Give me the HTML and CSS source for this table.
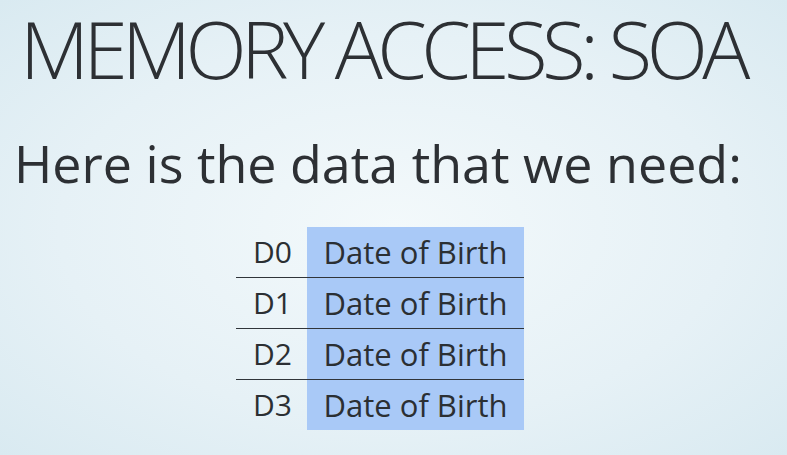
FILE: index.html
```html
<!DOCTYPE html>
<html>
<head>
<meta charset="utf-8">
<link rel="stylesheet" href="styles.css">
</head>
<body>
<div class="slide">
  <h1 class="title">MEMORY ACCESS: SOA</h1>
  <p class="lead">Here is the data that we need:</p>
  <div class="table">
    <div class="row"><span class="label">D0</span><span class="cell">Date of Birth</span></div>
    <div class="row"><span class="label">D1</span><span class="cell">Date of Birth</span></div>
    <div class="row"><span class="label">D2</span><span class="cell">Date of Birth</span></div>
    <div class="row"><span class="label">D3</span><span class="cell">Date of Birth</span></div>
  </div>
</div>
</body>
</html>
```
FILE: styles.css
```css
html, body {
  margin: 0;
  padding: 0;
}
body {
  width: 787px;
  height: 455px;
  overflow: hidden;
  background: radial-gradient(ellipse at 50% 50%, #f3f9fb 0%, #e6f1f6 60%, #d9eaf1 100%);
  font-family: "Open Sans", sans-serif;
  color: #2b2f33;
}
.slide {
  display: flex;
  flex-direction: column;
  padding-left: 14px;
}
.title {
  margin: 0;
  font-family: "Open Sans", sans-serif;
  font-weight: 300;
  font-size: 80px;
  line-height: 1.1;
  letter-spacing: -5.6px;
  margin-top: 4px;
  padding-left: 6px;
  color: #2d3034;
  white-space: nowrap;
}
.lead {
  margin: 45px 0 0 0;
  font-size: 52px;
  line-height: 1;
  font-weight: 400;
  color: #2d3034;
}
.table {
  align-self: flex-start;
  margin-left: 222px;
  margin-top: 38px;
  display: flex;
  flex-direction: column;
}
.row {
  display: flex;
  height: 50px;
  border-bottom: 1px solid #30353a;
}
.row:last-child {
  border-bottom: none;
}
.label {
  width: 56px;
  text-align: right;
  padding-right: 15px;
  font-size: 30px;
  line-height: 50px;
}
.cell {
  width: 217px;
  background: #a9c9f7;
  text-align: center;
  font-size: 31px;
  line-height: 50px;
}
```
